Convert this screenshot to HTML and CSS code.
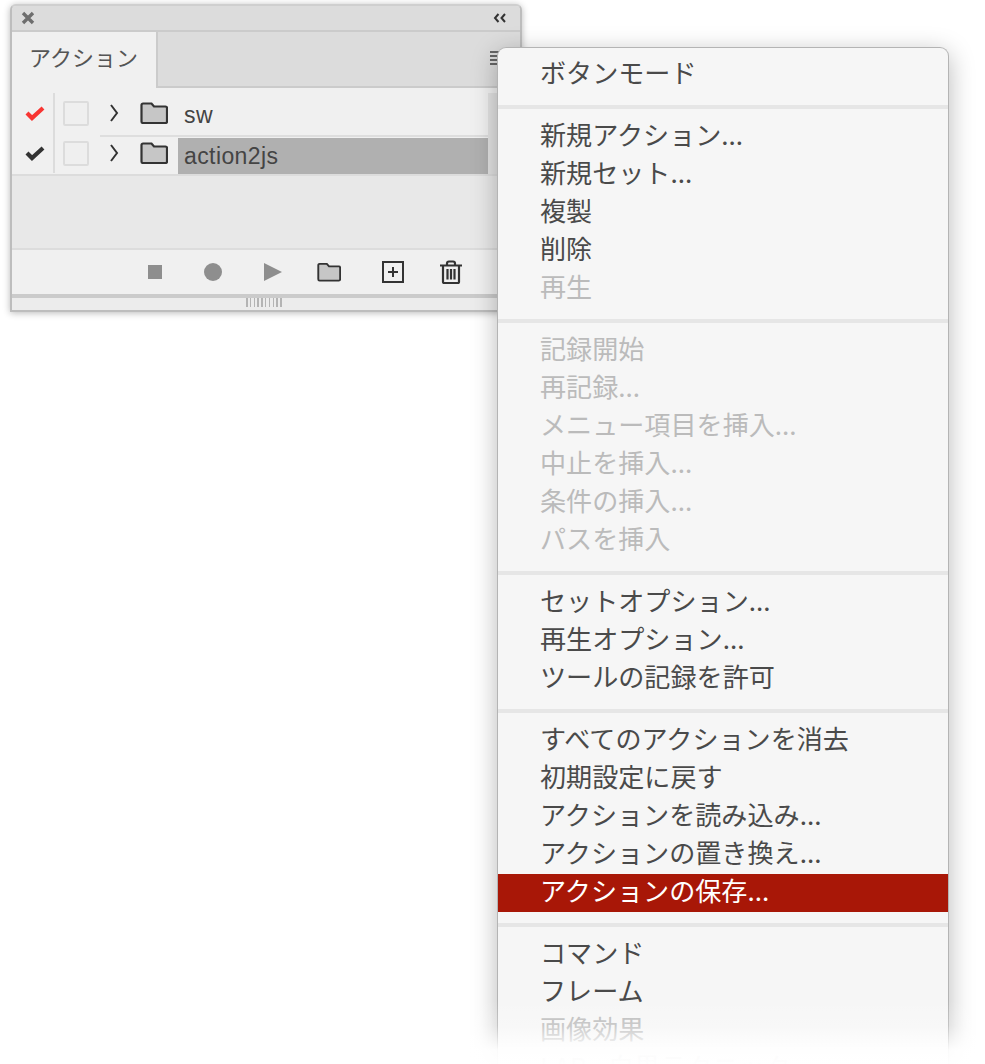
FILE: index.html
```html
<!DOCTYPE html>
<html lang="ja">
<head>
<meta charset="utf-8">
<title>アクション</title>
<link rel="stylesheet" href="styles.css">
</head>
<body>
<section class="panel">
  <header class="titlebar">
    <svg class="close" viewBox="0 0 14 14"><path d="M2 2l10 10M12 2L2 12"/></svg>
    <svg class="collapse" viewBox="0 0 14 10"><path d="M5.500 1L2 5l3.500 4M12 1L8.500 5l3.500 4"/></svg>
  </header>
  <div class="tabbar">
    <div class="tab">アクション</div>
    <svg class="burger" viewBox="0 0 16 16"><path d="M0 2h16M0 6h16M0 10h16M0 14h16"/></svg>
  </div>
  <div class="list">
    <div class="row">
      <div class="checkcell"><svg class="check red" viewBox="0 0 20 16"><path d="M2 8l5 5 11-10"/></svg></div>
      <div class="boxcell"><span class="box"></span></div>
      <svg class="chev" viewBox="0 0 10 18"><path d="M2 1L8 9l-6 8"/></svg>
      <svg class="folder" viewBox="0 0 28 22"><path d="M1.500 3a1.500 1.500 0 0 1 1.500-1.500h8.500l2.500 3h11.500a1.500 1.500 0 0 1 1.500 1.500v13.500a1.500 1.500 0 0 1-1.500 1.500h-22.500a1.500 1.500 0 0 1-1.500-1.500z"/></svg>
      <div class="name">sw</div>
    </div>
    <div class="row second">
      <div class="checkcell"><svg class="check dark" viewBox="0 0 20 16"><path d="M2 8l5 5 11-10"/></svg></div>
      <div class="boxcell"><span class="box"></span></div>
      <svg class="chev" viewBox="0 0 10 18"><path d="M2 1L8 9l-6 8"/></svg>
      <svg class="folder" viewBox="0 0 28 22"><path d="M1.500 3a1.500 1.500 0 0 1 1.500-1.500h8.500l2.500 3h11.500a1.500 1.500 0 0 1 1.500 1.500v13.500a1.500 1.500 0 0 1-1.500 1.500h-22.500a1.500 1.500 0 0 1-1.500-1.500z"/></svg>
      <div class="name selected">action2js</div>
    </div>
  </div>
  <div class="empty"></div>
  <footer class="toolbar">
    <span class="stop"></span>
    <span class="record"></span>
    <span class="play"></span>
    <svg class="folder tool" viewBox="0 0 28 22"><path d="M1.500 3a1.500 1.500 0 0 1 1.500-1.500h8.500l2.500 3h11.500a1.500 1.500 0 0 1 1.500 1.500v13.500a1.500 1.500 0 0 1-1.500 1.500h-22.500a1.500 1.500 0 0 1-1.500-1.500z"/></svg>
    <svg class="newitem" viewBox="0 0 22 22"><path d="M1 1h20v20H1zM11 6v10M6 11h10"/></svg>
    <svg class="trash" viewBox="0 0 22 24"><path d="M0 5.500h22M7 5V3.500Q7 1.500 9 1.500h4Q15 1.500 15 3.500V5M3 5.500v16.500a1 1 0 0 0 1 1h14a1 1 0 0 0 1-1V5.500M7.500 9v10.500M11 9v10.500M14.500 9v10.500"/></svg>
  </footer>
  <div class="grip"><span class="ridges"></span></div>
</section>

<nav class="menu">
  <div class="item">ボタンモード</div>
  <hr class="sep">
  <div class="item">新規アクション...</div>
  <div class="item">新規セット...</div>
  <div class="item">複製</div>
  <div class="item">削除</div>
  <div class="item off">再生</div>
  <hr class="sep">
  <div class="item off">記録開始</div>
  <div class="item off">再記録...</div>
  <div class="item off">メニュー項目を挿入...</div>
  <div class="item off">中止を挿入...</div>
  <div class="item off">条件の挿入...</div>
  <div class="item off">パスを挿入</div>
  <hr class="sep">
  <div class="item">セットオプション...</div>
  <div class="item">再生オプション...</div>
  <div class="item">ツールの記録を許可</div>
  <hr class="sep">
  <div class="item">すべてのアクションを消去</div>
  <div class="item">初期設定に戻す</div>
  <div class="item">アクションを読み込み...</div>
  <div class="item">アクションの置き換え...</div>
  <div class="item active">アクションの保存...</div>
  <hr class="sep">
  <div class="item">コマンド</div>
  <div class="item">フレーム</div>
  <div class="item off">画像効果</div>
  <div class="item off">LAB - 白黒テクニック</div>
</nav>
<div class="fade"></div>
</body>
</html>
```

FILE: styles.css
```css
* { box-sizing: border-box; }
html, body { margin: 0; padding: 0; }
body {
  position: relative;
  width: 985px;
  height: 1064px;
  overflow: hidden;
  background: #fff;
  font-family: "Noto Sans CJK JP", "Noto Sans", sans-serif;
}

/* floating panel */
.panel {
  position: absolute;
  left: 10px;
  top: 4px;
  width: 512px;
  height: 308px;
  display: flex;
  flex-direction: column;
  background: #e8e8e8;
  border: 2px solid #bdbdbd;
  border-top-color: #cfcfcf;
  border-radius: 6px 6px 0 0;
  box-shadow: 0 1px 7px rgba(0,0,0,.28);
  overflow: hidden;
}
.titlebar {
  height: 26px;
  flex: none;
  display: flex;
  align-items: center;
  justify-content: space-between;
  padding: 0 13px 0 9px;
  background: #dcdcdc;
  border-bottom: 2px solid #cbcbcb;
}
.close { width: 14px; height: 14px; fill: none; stroke: #6e6e6e; stroke-width: 3.400; }
.collapse { width: 14px; height: 10px; fill: none; stroke: #333; stroke-width: 2; }
.tabbar {
  height: 56px;
  flex: none;
  display: flex;
  justify-content: space-between;
  background: #dcdcdc;
  border-bottom: 2px solid #cbcbcb;
  position: relative;
}
.tab {
  width: 146px;
  height: 56px;
  padding: 8px 0 0 17px;
  background: #f0f0f0;
  border-right: 2px solid #cbcbcb;
  font-size: 22px;
  line-height: 32px;
  color: #555;
}
.burger { position: absolute; left: 478px; top: 18px; width: 16px; height: 16px; fill: none; stroke: #666; stroke-width: 2; }
.list {
  position: relative;
  flex: none;
  height: 88px;
  padding-top: 5px;
  background: #f0f0f0;
  border-bottom: 2px solid #dcdcdc;
}
.list::after {
  content: "";
  position: absolute;
  right: 0;
  top: 5px;
  bottom: 0;
  width: 32px;
  background: #e2e2e2;
}
.row { height: 40px; display: flex; align-items: center; position: relative; }
.row.second::before {
  content: "";
  position: absolute;
  left: 88px;
  right: 32px;
  top: 2px;
  height: 2px;
  background: #dedede;
}
.checkcell {
  width: 43px;
  height: 40px;
  flex: none;
  display: flex;
  align-items: center;
  justify-content: center;
  padding-left: 4px;
  border-right: 2px solid #dcdcdc;
}
.check { width: 20px; height: 16px; fill: none; stroke-width: 4.200; }
.check.red { stroke: #f83532; }
.check.dark { stroke: #333; }
.boxcell { width: 42px; flex: none; display: flex; justify-content: center; }
.box {
  width: 26px;
  height: 25px;
  border: 2px solid #dcdcdc;
  border-radius: 2px;
  background: #efefef;
}
.chev { width: 10px; height: 18px; margin-left: 12px; flex: none; fill: none; stroke: #333; stroke-width: 2; }
.folder { width: 28px; height: 22px; flex: none; fill: #c6c6c6; stroke: #333; stroke-width: 2.200; }
.row .folder { margin-left: 21px; }
.name {
  margin-left: 10px;
  margin-top: 3px;
  height: 36px;
  padding: 0 6px;
  line-height: 36px;
  font-size: 23px;
  letter-spacing: .4px;
  font-family: "Liberation Sans", "Noto Sans", sans-serif;
  color: #444;
  flex: none;
}
.row .selected { background: #b0b0b0; width: 310px; margin-top: 6px; }
.empty { flex: 1; background: #e8e8e8; border-bottom: 2px solid #dcdcdc; }
.toolbar {
  height: 48px;
  flex: none;
  display: flex;
  align-items: center;
  padding-left: 136px;
  background: #f0f0f0;
  border-bottom: 4px solid #cbcbcb;
}
.stop { width: 14px; height: 14px; background: #8e8e8e; flex: none; }
.record { width: 18px; height: 18px; margin-left: 42px; border-radius: 50%; background: #8e8e8e; flex: none; }
.play {
  margin-left: 42px;
  flex: none;
  width: 0;
  height: 0;
  border-left: 18px solid #8e8e8e;
  border-top: 9px solid transparent;
  border-bottom: 9px solid transparent;
}
.toolbar .tool { margin-left: 35px; width: 24px; height: 20px; }
.newitem { width: 22px; height: 22px; margin-left: 41px; flex: none; fill: none; stroke: #333; stroke-width: 2; }
.trash { width: 22px; height: 24px; margin-left: 36px; flex: none; fill: none; stroke: #333; stroke-width: 2.200; }
.grip {
  height: 12px;
  flex: none;
  display: flex;
  padding-left: 234px;
  background: #ececec;
}
.ridges {
  width: 38px;
  height: 9px;
  background: repeating-linear-gradient(90deg, #b4b4b4 0 1.500px, transparent 1.500px 3.800px);
}

/* popup menu */
.menu {
  position: absolute;
  left: 497px;
  top: 47px;
  width: 452px;
  padding-top: 8px;
  background: #f6f6f6;
  border: 1px solid #b4b4b4;
  border-bottom: 0;
  border-radius: 9px 9px 0 0;
  box-shadow: 0 6px 26px rgba(0,0,0,.28);
}
.item {
  height: 38px;
  padding-left: 42px;
  font-size: 26.100px;
  line-height: 32px;
  color: #4a4a4a;
  white-space: nowrap;
}
.item.off { color: #bbb; }
.item.active { background: #a81707; color: #fff; }
.sep {
  height: 4px;
  margin: 11px 0 9px;
  border: 0;
  background: #e6e6e6;
}

.fade {
  position: absolute;
  left: 0;
  right: 0;
  bottom: 0;
  height: 64px;
  background: linear-gradient(to bottom, rgba(255,255,255,0), rgba(255,255,255,.22) 40%, rgba(255,255,255,.93) 78%, rgba(255,255,255,.98) 100%);
}
```
